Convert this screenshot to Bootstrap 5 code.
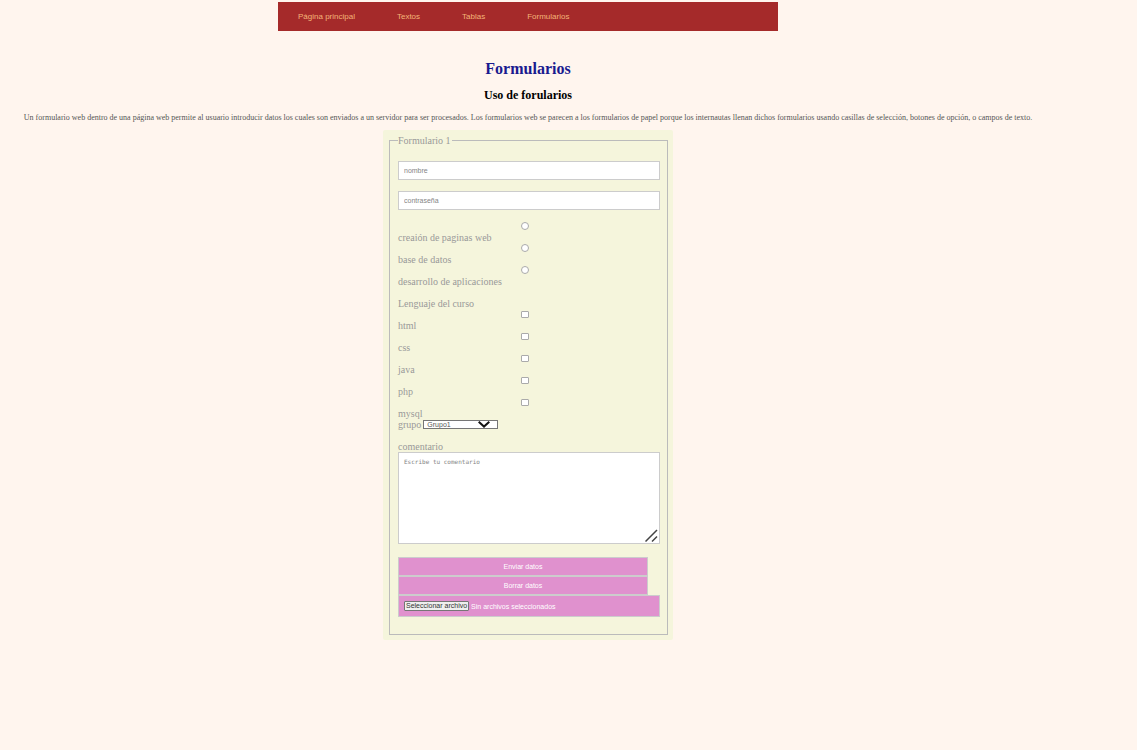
<!DOCTYPE html>
<html lang="es">
<head>
<meta charset="utf-8">
<meta name="viewport" content="width=device-width, initial-scale=1">
<title>Formularios</title>
<link rel="stylesheet" href="https://cdn.jsdelivr.net/npm/bootstrap@5.3.0/dist/css/bootstrap.min.css">
<style>
  body { background: #fff5ee; color: #555; font-family: "Liberation Serif", "Times New Roman", serif; font-size: 10px; line-height: 11px; }
  .page { margin-right: 81px; padding-top: 2px; }
  .menu { max-width: 500px; background: #a52a2a; padding: 0 20px; gap: 42px; font-family: "Liberation Sans", Arial, sans-serif; font-size: 8px; }
  .menu a { color: #f4b478; line-height: 29px; padding: 0; }
  h1 { font-size: 16px; line-height: 18px; font-weight: 700; color: #1a1a8f; margin: 29px 0 10px; }
  h2 { font-size: 12px; line-height: 14px; font-weight: 700; color: #000; margin: 0 0 11px; }
  .intro { font-size: 8px; line-height: 10px; margin: 0 0 7px; }
  .panel { max-width: 290px; background: #f5f5dc; border-radius: 2px; padding: 5px 5px 5px 6px; color: #999; }
  .panel fieldset { border: 1px solid #bbb; padding: 15px 7px 17px 8px; }
  .panel legend { float: none; width: auto; font-size: 10px; line-height: 11px; margin: 0; padding: 0 1px 0 0; }
  .field, .action { border: 1px solid #ccc; border-radius: 0; font-family: "Liberation Sans", Arial, sans-serif; font-size: 7px; line-height: 9px; padding: 4px 5px; }
  .field { background: #fff; height: 19px; margin-bottom: 11px; color: #555; }
  .field::placeholder { color: #858585; opacity: 1; }
  textarea.field { height: 92px; resize: none; margin: 0; font-family: "DejaVu Sans Mono", monospace; font-size: 6px; }
  .comment { margin-bottom: 13px; }
  .grip { right: 2px; bottom: 2px; }
  .tick { appearance: none; width: 8px; height: 8px; background: #fff; border: 1px solid #aaa; border-radius: 1px; margin: 1px 0 2px; }
  .tick[type=checkbox] { height: 7px; margin: 2px 0; }
  .tick[type=radio] { border-radius: 50%; }
  .tick:checked { background: #555; }
  .tick-row { padding-right: 8px; }
  .group-row { gap: 2px; }
  .group { appearance: none; width: 75px; height: 9px; border: 1px solid #767676; border-radius: 0; background: #fff; color: #555; font-family: "Liberation Sans", Arial, sans-serif; font-size: 7px; line-height: 7px; padding: 0 3px; }
  .chevron { right: 8px; top: 1px; }
  .action { background: #e091ce; color: #fff; }
  .send { width: 250px; height: 19px; }
  .upload { height: 22px; gap: 2px; }
  .upload:focus-within { outline: 1px solid #555; }
  .choose { background: #efefef; color: #333; border: 1px solid #767676; border-radius: 1px; line-height: 8px; padding: 0 1px; }
</style>
</head>
<body>
<div class="page">
  <nav class="menu d-flex mx-auto">
    <a class="text-decoration-none" href="#">Página principal</a>
    <a class="text-decoration-none" href="#">Textos</a>
    <a class="text-decoration-none" href="#">Tablas</a>
    <a class="text-decoration-none" href="#">Formularios</a>
  </nav>
  <main>
    <h1 class="text-center">Formularios</h1>
    <h2 class="text-center">Uso de forularios</h2>
    <p class="intro text-center">Un formulario web dentro de una página web permite al usuario introducir datos los cuales son enviados a un servidor para ser procesados. Los formularios web se parecen a los formularios de papel porque los internautas llenan dichos formularios usando casillas de selección, botones de opción, o campos de texto.</p>
    <form class="panel mx-auto">
      <fieldset>
        <legend>Formulario 1</legend>
        <input class="field d-block w-100" type="text" placeholder="nombre" aria-label="nombre">
        <input class="field d-block w-100" type="password" placeholder="contraseña" aria-label="contraseña">

        <div class="tick-row d-flex justify-content-center"><input class="tick" type="radio" name="tema" id="web"></div>
        <label class="d-block" for="web">creaión de paginas web</label>
        <div class="tick-row d-flex justify-content-center"><input class="tick" type="radio" name="tema" id="datos"></div>
        <label class="d-block" for="datos">base de datos</label>
        <div class="tick-row d-flex justify-content-center"><input class="tick" type="radio" name="tema" id="apps"></div>
        <label class="d-block" for="apps">desarrollo de aplicaciones</label>
        <br>
        <div>Lenguaje del curso</div>
        <div class="tick-row d-flex justify-content-center"><input class="tick" type="checkbox" id="html"></div>
        <label class="d-block" for="html">html</label>
        <div class="tick-row d-flex justify-content-center"><input class="tick" type="checkbox" id="css"></div>
        <label class="d-block" for="css">css</label>
        <div class="tick-row d-flex justify-content-center"><input class="tick" type="checkbox" id="java"></div>
        <label class="d-block" for="java">java</label>
        <div class="tick-row d-flex justify-content-center"><input class="tick" type="checkbox" id="php"></div>
        <label class="d-block" for="php">php</label>
        <div class="tick-row d-flex justify-content-center"><input class="tick" type="checkbox" id="mysql"></div>
        <label class="d-block" for="mysql">mysql</label>

        <div class="group-row d-flex align-items-center">
          <label for="grupo">grupo</label>
          <div class="position-relative d-flex">
            <select class="group" id="grupo"><option>Grupo1</option><option>Grupo2</option></select>
            <svg class="chevron position-absolute pe-none" width="12" height="7" viewBox="0 0 12 7" fill="none" stroke="#111" stroke-width="2"><path d="M.7.8 6 5.6 11.3.8"/></svg>
          </div>
        </div>
        <br>
        <label class="d-block" for="comentario">comentario</label>
        <div class="comment position-relative">
          <textarea class="field d-block w-100" id="comentario" placeholder="Escribe tu comentario"></textarea>
          <svg class="grip position-absolute pe-none" width="13" height="13" viewBox="0 0 13 13" stroke="#444" stroke-width="1.5"><path d="M.5 12.5 12 1M7 12.5 12 7.5"/></svg>
        </div>
        <button class="action send d-block" type="submit">Enviar datos</button>
        <button class="action send d-block" type="reset">Borrar datos</button>
        <label class="action upload position-relative d-flex align-items-center" for="archivo">
          <span class="choose">Seleccionar archivo</span>
          <span>Sin archivos seleccionados</span>
          <input class="position-absolute top-0 start-0 w-100 h-100 opacity-0" type="file" id="archivo">
        </label>
      </fieldset>
    </form>
  </main>
</div>
<script src="https://cdn.jsdelivr.net/npm/bootstrap@5.3.0/dist/js/bootstrap.bundle.min.js"></script>
</body>
</html>
